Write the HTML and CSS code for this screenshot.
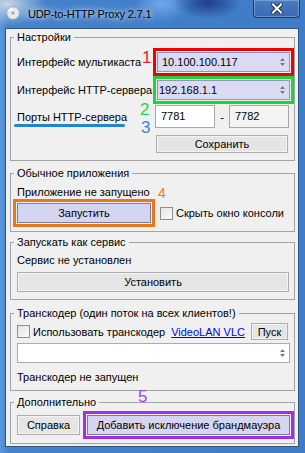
FILE: index.html
```html
<!DOCTYPE html>
<html lang="ru">
<head>
    <meta charset="UTF-8">
    <title>UDP-to-HTTP Proxy 2.7.1</title>
    <link rel="stylesheet" href="styles.css">
</head>
<body>
    <div class="window">
        <div class="titlebar">
            <svg class="app-icon" width="14" height="14" viewBox="0 0 14 14">
                <circle cx="7" cy="7" r="6.3" fill="#e9ecef" stroke="#9aa3ad" stroke-width="0.8"/>
                <path d="M3 5 A4.5 4.5 0 0 1 7 2.5" stroke="#ffffff" stroke-width="1.4" fill="none"/>
                <circle cx="7" cy="7" r="1.8" fill="#b7c0ca"/>
                <circle cx="7" cy="7" r="0.8" fill="#6d7680"/>
            </svg>
            <span class="title">UDP-to-HTTP Proxy 2.7.1</span>
            <div class="close-btn">
                <svg width="12" height="11" viewBox="0 0 12 11">
                    <path d="M2 1.5 L10 9.5 M10 1.5 L2 9.5" stroke="#1b2f52" stroke-width="4" stroke-linecap="square"/>
                    <path d="M2 1.5 L10 9.5 M10 1.5 L2 9.5" stroke="#ffffff" stroke-width="2" stroke-linecap="square"/>
                </svg>
            </div>
        </div>

        <div class="client">
            <fieldset class="group group-settings">
                <legend>Настройки</legend>
                <div class="row row-first">
                    <span class="label">Интерфейс мультикаста</span>
                    <div class="combo combo-hl mark-red"><span class="pad-5">10.100.100.117</span>
                        <svg class="arrows" width="5" height="8" viewBox="0 0 5 8"><path d="M0 3 L2.5 0 L5 3 Z M0 5 L2.5 8 L5 5 Z" fill="#7a7a7a"/></svg>
                    </div>
                </div>
                <div class="row row-second">
                    <span class="label">Интерфейс HTTP-сервера</span>
                    <div class="combo combo-hl mark-green"><span class="pad-2">192.168.1.1</span>
                        <svg class="arrows" width="5" height="8" viewBox="0 0 5 8"><path d="M0 3 L2.5 0 L5 3 Z M0 5 L2.5 8 L5 5 Z" fill="#7a7a7a"/></svg>
                    </div>
                </div>
                <div class="row row-ports">
                    <span class="label label-ports">Порты HTTP-сервера</span>
                    <div class="input">7781</div>
                    <span class="dash">-</span>
                    <div class="input input-ro">7782</div>
                </div>
                <button class="btn btn-save">Сохранить</button>
            </fieldset>

            <fieldset class="group group-app">
                <legend>Обычное приложения</legend>
                <div class="status">Приложение не запущено</div>
                <div class="row row-run">
                    <button class="btn btn-hl btn-run mark-orange">Запустить</button>
                    <span class="check"></span>
                    <span class="check-label">Скрыть окно консоли</span>
                </div>
            </fieldset>

            <fieldset class="group group-service">
                <legend>Запускать как сервис</legend>
                <div class="status status-service">Сервис не установлен</div>
                <button class="btn btn-wide">Установить</button>
            </fieldset>

            <fieldset class="group group-trans">
                <legend>Транскодер (один поток на всех клиентов!)</legend>
                <div class="row row-trans">
                    <span class="check"></span>
                    <span class="check-label">Использовать транскодер</span>
                    <a class="link" href="#">VideoLAN VLC</a>
                    <button class="btn btn-go">Пуск</button>
                </div>
                <div class="combo combo-plain">
                    <span></span>
                    <svg class="arrows" width="5" height="8" viewBox="0 0 5 8"><path d="M0 3 L2.5 0 L5 3 Z M0 5 L2.5 8 L5 5 Z" fill="#7a7a7a"/></svg>
                </div>
                <div class="status status-trans">Транскодер не запущен</div>
            </fieldset>

            <fieldset class="group group-extra">
                <legend>Дополнительно</legend>
                <div class="row row-extra">
                    <button class="btn btn-help">Справка</button>
                    <button class="btn btn-hl btn-fw mark-purple">Добавить исключение брандмауэра</button>
                </div>
            </fieldset>

            <!-- annotation marks -->
            <span class="num num-1">1</span>
            <span class="num num-2">2</span>
            <span class="num num-3">3</span>
            <span class="num num-4">4</span>
            <span class="num num-5">5</span>
            <span class="underline-mark"></span>
        </div>
    </div>
</body>
</html>
```

FILE: styles.css
```css
body {
    margin: 0;
    width: 305px;
    height: 453px;
    overflow: hidden;
    font-family: "Liberation Sans", Arial, sans-serif;
    font-size: 11px;
    color: #000;
}

.window {
    height: 453px;
    box-sizing: border-box;
    padding: 0 6px 6px 5px;
    display: flex;
    flex-direction: column;
    background:
        radial-gradient(ellipse 38px 22px at 8px 4px, rgba(205, 218, 232, 0.95), rgba(205, 218, 232, 0) 100%),
        radial-gradient(ellipse 34px 16px at 208px 3px, #1f3f88, rgba(31, 63, 136, 0) 100%),
        radial-gradient(ellipse 28px 18px at 162px 4px, #72a8e8, rgba(114, 168, 232, 0) 100%),
        linear-gradient(90deg, #5a98dd 0, #4482cc 8px, #3f7cc7 100%);
}

.titlebar {
    height: 28px;
    flex: none;
    display: flex;
    align-items: flex-start;
}

.app-icon {
    margin: 6px 0 0 1px;
}

.title {
    margin: 8px 0 0 8px;
    font-size: 11px;
    letter-spacing: -0.15px;
    line-height: 13px;
    text-shadow: 0 0 5px rgba(255, 255, 255, 0.9), 0 0 9px rgba(255, 255, 255, 0.7);
}

.close-btn {
    margin-left: auto;
    margin-right: -1px;
    width: 45px;
    height: 17px;
    border: 1px solid #1c3a6c;
    border-top: none;
    border-radius: 0 0 4px 4px;
    background: linear-gradient(#4a7cc2, #3a6ab2);
    box-shadow: inset 0 0 0 1px rgba(255, 255, 255, 0.25);
    display: flex;
    justify-content: center;
    align-items: center;
}

.client {
    flex: 1;
    position: relative;
    background: #f0f0f0;
    border: 1px solid #32557f;
}

.group {
    margin: 0 3px 0 4px;
    padding: 0 4px 0 6px;
    border: 1px solid #a3a3a3;
    min-width: 0;
}

.group legend {
    padding: 0 3px;
    margin-left: -3px;
    line-height: 13px;
}

.group-settings {
    margin-top: 2px;
    padding-top: 8px;
    padding-bottom: 7px;
}

.group-app {
    margin-top: 6px;
    padding-top: 6px;
    padding-bottom: 8px;
}

.group-service {
    margin-top: 4px;
    padding-top: 5px;
    padding-bottom: 7px;
}

.group-trans {
    margin-top: 7px;
    padding-top: 3px;
    padding-bottom: 6px;
}

.group-extra {
    margin-top: 5px;
    padding-top: 6px;
    padding-bottom: 8px;
}

.row {
    display: flex;
    align-items: center;
}

.label {
    width: 140px;
    flex: none;
}

.row-second {
    margin-top: 8px;
}

.row-ports {
    margin-top: 5px;
}

.label-ports {
    width: 138px;
}

.combo {
    box-sizing: border-box;
    height: 20px;
    flex: 1;
    display: flex;
    align-items: center;
    justify-content: space-between;
    padding-right: 4px;
    border: 1px solid #acacac;
    background: #ffffff;
}

.combo-hl {
    background: #dadaf4;
    border-color: #9494b4;
}

.combo-plain {
    margin-top: 3px;
}

.pad-5 {
    padding-left: 4px;
}

.pad-2 {
    padding-left: 1px;
}

.arrows {
    flex: none;
}

.input {
    box-sizing: border-box;
    width: 60px;
    height: 23px;
    padding: 4px 0 0 5px;
    border: 1px solid #a8a8a8;
    background: #fff;
}

.input-ro {
    background: #f4f4f4;
}

.dash {
    width: 14px;
    text-align: center;
}

.btn {
    box-sizing: border-box;
    height: 20px;
    padding: 0;
    font: inherit;
    color: #000;
    border: 1px solid #adadad;
    background: #e5e5e5;
    box-shadow: inset 0 0 0 1px #f4f4f4;
}

.btn-hl {
    background: #d5d5f1;
    border-color: #7c7c9c;
    box-shadow: none;
}

.btn-save {
    display: block;
    margin: 7px 0 0 139px;
    width: 132px;
    height: 18px;
}

.status {
    line-height: 13px;
}

.row-run {
    margin-top: 4px;
}

.btn-run {
    width: 134px;
}

.check {
    box-sizing: border-box;
    width: 13px;
    height: 13px;
    flex: none;
    border: 1px solid #8e8f8f;
    background: linear-gradient(135deg, #e3e3e3, #fbfbfb);
}

.row-run .check {
    margin-left: 9px;
}

.check-label {
    margin-left: 3px;
}

.btn-wide {
    display: block;
    margin-top: 5px;
    width: 272px;
}

.row-trans {
    height: 17px;
}

.link {
    margin-left: 6px;
    color: #0000ee;
    text-decoration: underline;
}

.btn-go {
    margin-left: auto;
    margin-right: 2px;
    width: 37px;
    height: 17px;
}

.status-trans {
    margin-top: 8px;
}

.btn-help {
    width: 63px;
}

.btn-fw {
    margin-left: 7px;
    flex: 1;
}

/* annotation boxes */
.mark-red {
    outline: 3px solid #f00000;
    outline-offset: 1px;
}

.mark-green {
    outline: 3px solid #22d23a;
    outline-offset: 1px;
}

.mark-orange {
    outline: 3px solid #e8761c;
    outline-offset: 1px;
}

.mark-purple {
    outline: 3px solid #a22fe6;
    outline-offset: 1px;
}

.num {
    position: absolute;
    font-size: 17px;
    line-height: 17px;
}

.num-1 {
    left: 136px;
    top: 20px;
    color: #ee1c24;
}

.num-2 {
    left: 134px;
    top: 72px;
    color: #2bd14a;
}

.num-3 {
    left: 135px;
    top: 90px;
    color: #2a8ae0;
}

.num-4 {
    left: 152px;
    top: 157px;
    font-size: 14px;
    line-height: 14px;
    color: #f07a20;
}

.num-5 {
    left: 132px;
    top: 359px;
    color: #a83ee6;
}

.underline-mark {
    position: absolute;
    left: 8px;
    top: 95px;
    width: 111px;
    height: 3px;
    border-radius: 2px;
    background: #1f86d6;
}
```
